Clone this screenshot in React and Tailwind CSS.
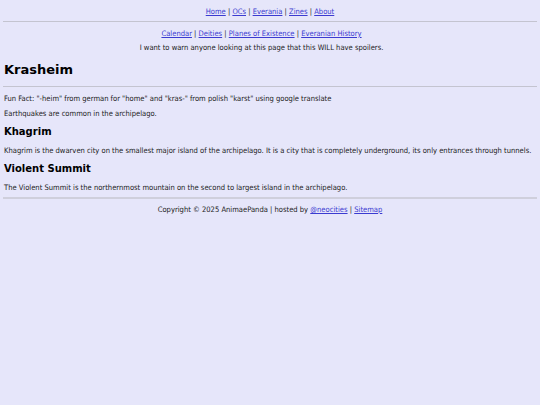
export default function App() {
  const link = "text-[#3b3bd1] underline";
  return (
    <div className="min-h-[405px] bg-[#e6e6fa] px-[3px] font-['DejaVu_Sans_Condensed','DejaVu_Sans',sans-serif] text-[7.55px] leading-[10px] text-[#222]">
      <nav className="pt-[7px] text-center">
        <a className={link} href="#">Home</a> | <a className={link} href="#">OCs</a> |{" "}
        <a className={link} href="#">Everania</a> | <a className={link} href="#">Zines</a> |{" "}
        <a className={link} href="#">About</a>
      </nav>
      <hr className="mt-[4px] border-t border-[#c4c4d0]" />
      <div className="pr-[17px] text-center">
        <nav className="mt-[7px]">
          <a className={link} href="#">Calendar</a> | <a className={link} href="#">Deities</a> |{" "}
          <a className={link} href="#">Planes of Existence</a> |{" "}
          <a className={link} href="#">Everanian History</a>
        </nav>
        <p className="mt-[4px]">I want to warn anyone looking at this page that this WILL have spoilers.</p>
      </div>

      <h1 className="mt-[9px] pl-[1px] font-['DejaVu_Sans',sans-serif] text-[13px] leading-[16px] font-bold text-black">Krasheim</h1>
      <hr className="mt-[8px] border-t border-[#c4c4d0]" />
      <p className="mt-[7px] pl-[1px]">Fun Fact: "-heim" from german for "home" and "kras-" from polish "karst" using google translate</p>
      <p className="mt-[5px] pl-[1px]">Earthquakes are common in the archipelago.</p>

      <h2 className="mt-[7px] pl-[1px] font-['DejaVu_Sans',sans-serif] text-[10px] leading-[12px] font-bold text-black">Khagrim</h2>
      <p className="mt-[8px] pl-[1px]">Khagrim is the dwarven city on the smallest major island of the archipelago. It is a city that is completely underground, its only entrances through tunnels.</p>

      <h2 className="mt-[7px] pl-[1px] font-['DejaVu_Sans',sans-serif] text-[10px] leading-[12px] font-bold text-black">Violent Summit</h2>
      <p className="mt-[8px] pl-[1px]">The Violent Summit is the northernmost mountain on the second to largest island in the archipelago.</p>

      <hr className="mt-[4px] border-t-2 border-[#cfcfdc]" />
      <footer className="mt-[6px] text-center">
        Copyright © 2025 AnimaePanda | hosted by <a className={link} href="#">@neocities</a> |{" "}
        <a className={link} href="#">Sitemap</a>
      </footer>
    </div>
  );
}
